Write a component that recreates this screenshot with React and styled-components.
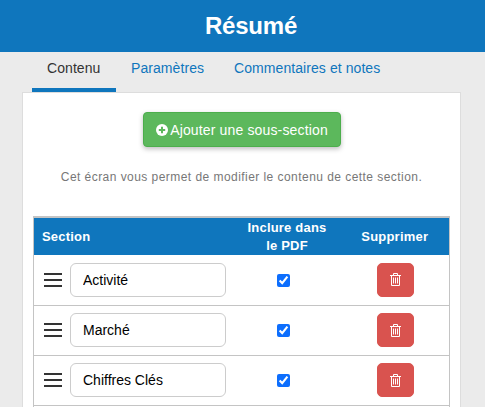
import React from "react";
import styled, { createGlobalStyle } from "styled-components";

const Global = createGlobalStyle`
  html, body { margin: 0; padding: 0; height: 100%; overflow: hidden; }
  body { background: #ebebeb; font-family: "Liberation Sans", Arial, sans-serif; letter-spacing: .07px; }
  * { box-sizing: border-box; }
`;
const Page = styled.div`height: 407px; overflow: hidden;`;
const Header = styled.header`
  height: 52px; background: #0f76bd; color: #fff; display: flex; align-items: center; justify-content: center;
  padding-left: 17px; font-size: 24px; font-weight: 700; letter-spacing: -.2px;
`;
const Tabs = styled.nav`height: 40px; display: flex; padding-left: 32px; gap: 0;`;
const Tab = styled.a`
  height: 40px; min-width: 84px; padding: 8px 15px 0; font-size: 14px; line-height: 16px;
  color: ${p => (p.$active ? "#333" : "#0f76bd")};
  border-bottom: 4px solid ${p => (p.$active ? "#0f76bd" : "transparent")};
`;
const Panel = styled.main`
  margin: 0 24px 0 22px; background: #fff; border: 1px solid #ddd; border-bottom: 0; padding: 19px 10px 0; height: 320px;
`;
const Center = styled.div`display: flex; justify-content: center; padding-left: 1px;`;
const AddButton = styled.button`
  height: 35px; width: 198px; padding: 0; background: #5cb85c; color: #fff; border: 1px solid #4cae4c; border-radius: 4px;
  font: 14px "Liberation Sans", Arial, sans-serif; letter-spacing: .15px;
  display: flex; align-items: center; justify-content: center; gap: 2px;
  box-shadow: 0 2px 5px rgba(0,0,0,.26);
`;
const Help = styled.p`
  margin: 22px 0 0; text-align: center; font-size: 12px; line-height: 16px; color: #777; letter-spacing: .45px;
`;
const Table = styled.table`
  margin-top: 31px; width: 417px; border-collapse: collapse; table-layout: fixed; border: 1px solid #c4c4c4; border-top-width: 2px;
`;
const Head = styled.th`
  height: 38px; background: #0f76bd; color: #fff; font-size: 13px; line-height: 18px; font-weight: 700;
  padding: 0 ${p => (p.$shift ? 8 : 12)}px 0 ${p => (p.$left ? 8 : p.$shift ? 16 : 12)}px;
  letter-spacing: .2px; text-align: ${p => (p.$left ? "left" : "center")};
`;
const Row = styled.tr`border-bottom: 1px solid #c4c4c4;`;
const Cell = styled.td`height: 50px; padding: 0; text-align: center; vertical-align: middle;`;
const NameCell = styled.div`display: flex; align-items: center; gap: 8px; padding-left: 10px;`;
const Handle = styled.svg`width: 18px; height: 14px; flex: none; display: block;`;
const NameInput = styled.input`
  width: 156px; height: 34px; border: 1px solid #ccc; border-radius: 6px; padding: 0 12px; color: #000; background: #fff;
  font: 14px "Liberation Sans", Arial, sans-serif; letter-spacing: 0; outline: none;
`;
const Check = styled.input`width: 13px; height: 13px; margin: 0; accent-color: #0d6efd; vertical-align: middle;`;
const DeleteButton = styled.button`
  width: 37px; height: 34px; margin-left: 2px; border: 1px solid #d9534f; border-radius: 5px; background: #d9534f; padding: 0;
  display: inline-flex; align-items: center; justify-content: center; vertical-align: middle;
`;

const Plus = () => (
  <svg width="12" height="12" viewBox="0 0 12 12" aria-hidden="true">
    <circle cx="6" cy="6" r="6" fill="#fff" />
    <path d="M2.8 6h6.4M6 2.8v6.4" stroke="#5cb85c" strokeWidth="2" />
  </svg>
);
const Trash = () => (
  <svg width="11" height="13" viewBox="0 0 11 13" fill="none" stroke="#fff" aria-hidden="true">
    <path d="M0 2.5h11M3.5 2.5V.5h4v2M1.5 2.5v10h8v-10M3.5 4.5v6M5.5 4.5v6M7.5 4.5v6" />
  </svg>
);

const rows = ["Activité", "Marché", "Chiffres Clés", ""];

export default function App() {
  return (
    <Page>
      <Global />
      <Header>Résumé</Header>
      <Tabs>
        <Tab $active>Contenu</Tab>
        <Tab>Paramètres</Tab>
        <Tab>Commentaires et notes</Tab>
      </Tabs>
      <Panel>
        <Center>
          <AddButton><Plus />Ajouter une sous-section</AddButton>
        </Center>
        <Help>Cet écran vous permet de modifier le contenu de cette section.</Help>
        <Table>
          <colgroup>
            <col style={{ width: 192 }} />
            <col style={{ width: 115 }} />
            <col />
          </colgroup>
          <thead>
            <tr>
              <Head $left>Section</Head>
              <Head $shift>Inclure dans le PDF</Head>
              <Head>Supprimer</Head>
            </tr>
          </thead>
          <tbody>
            {rows.map((r, i) => (
              <Row key={i}>
                <Cell>
                  <NameCell>
                    <Handle viewBox="0 0 18 14" aria-hidden="true">
                      <path d="M0 1h18M0 7h18M0 13h18" stroke="#333" strokeWidth="2" />
                    </Handle>
                    <NameInput readOnly value={r} />
                  </NameCell>
                </Cell>
                <Cell><Check type="checkbox" readOnly checked /></Cell>
                <Cell>
                  <DeleteButton><Trash /></DeleteButton>
                </Cell>
              </Row>
            ))}
          </tbody>
        </Table>
      </Panel>
    </Page>
  );
}
